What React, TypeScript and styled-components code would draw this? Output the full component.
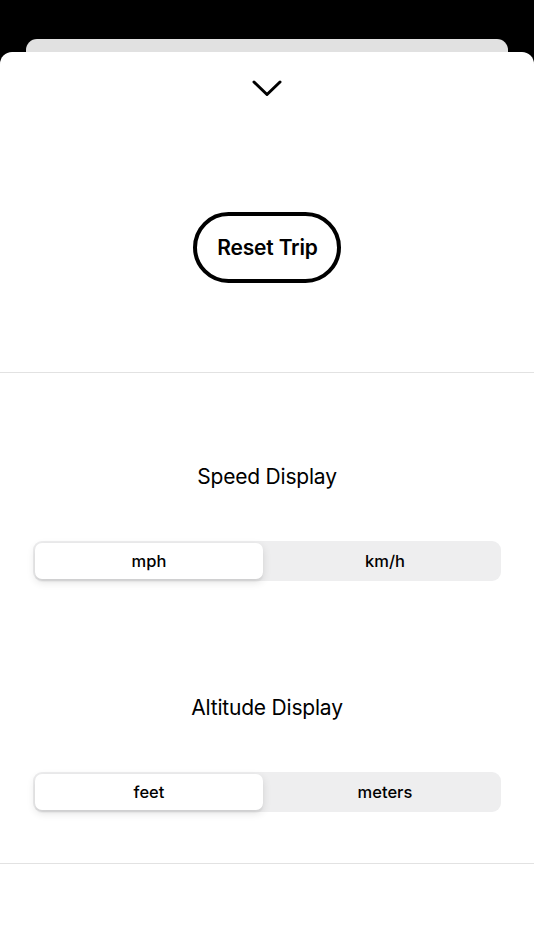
import React, { useState } from "react";
import styled, { createGlobalStyle } from "styled-components";

const Global = createGlobalStyle`
  html, body { margin: 0; padding: 0; background: #000; }
  body { font-family: Inter, "Noto Sans", "Liberation Sans", sans-serif; -webkit-font-smoothing: antialiased; }
`;

const Page = styled.div`
  min-height: 950px;
  background: #000;
  padding-top: 39px;
  box-sizing: border-box;
  display: flex;
  flex-direction: column;
`;

const BackCard = styled.div`
  height: 13px;
  margin: 0 26px;
  background: #e1e1e1;
  border-radius: 11px 11px 0 0;
`;

const Sheet = styled.div`
  flex: 1;
  background: #fff;
  border-radius: 12px 12px 0 0;
  display: flex;
  flex-direction: column;
`;

const TopSection = styled.section`
  height: 320px;
  display: flex;
  flex-direction: column;
  align-items: center;
  padding-top: 28px;
  box-sizing: border-box;
`;

const Chevron = styled.svg`
  width: 30px;
  height: 17px;
  display: block;
`;

const ResetButton = styled.button`
  margin-top: 115px;
  width: 148px;
  height: 71px;
  border: 4px solid #000;
  border-radius: 36px;
  background: #fff;
  color: #000;
  font-family: inherit;
  font-size: 21px;
  font-weight: 600;
  letter-spacing: -0.2px;
  cursor: pointer;
  padding: 0 0 0 1px;
  line-height: 1;
`;

const Divider = styled.hr`
  margin: 0;
  border: 0;
  height: 1px;
  background: #e2e2e2;
`;

const Settings = styled.section`
  padding: 90px 33px 51px;
  display: flex;
  flex-direction: column;
`;

const Group = styled.div<{ $first?: boolean }>`
  display: flex;
  flex-direction: column;
  margin-top: ${(p) => (p.$first ? 0 : 113)}px;
`;

const Title = styled.h2`
  margin: 0 0 50px;
  text-align: center;
  font-size: 21px;
  line-height: 28px;
  font-weight: 400;
  color: #000;
  letter-spacing: -0.2px;
`;

const Segmented = styled.div`
  height: 40px;
  background: #eeeeef;
  border-radius: 9px;
  padding: 2px;
  box-sizing: border-box;
  display: grid;
  grid-template-columns: 1fr 1fr;
  column-gap: 8px;
`;

const Segment = styled.button<{ $active: boolean }>`
  border: 0;
  border-radius: 7px;
  background: ${(p) => (p.$active ? "#fff" : "transparent")};
  box-shadow: ${(p) =>
    p.$active ? "0 3px 8px rgba(0,0,0,0.12), 0 3px 1px rgba(0,0,0,0.04)" : "none"};
  font-family: inherit;
  font-size: 16.5px;
  font-weight: 500;
  color: #000;
  cursor: pointer;
  padding: 0;
`;

const Footer = styled.div`
  flex: 1;
`;

function Control({ options, initial }: { options: string[]; initial: number }) {
  const [sel, setSel] = useState(initial);
  return (
    <Segmented>
      {options.map((o, i) => (
        <Segment key={o} $active={sel === i} onClick={() => setSel(i)}>
          {o}
        </Segment>
      ))}
    </Segmented>
  );
}

export default function App() {
  return (
    <>
      <Global />
      <Page>
        <BackCard />
        <Sheet>
          <TopSection>
            <Chevron viewBox="0 0 30 17" fill="none">
              <path
                d="M2 2 L15 14.5 L28 2"
                stroke="#000"
                strokeWidth="3"
                strokeLinecap="round"
                strokeLinejoin="round"
              />
            </Chevron>
            <ResetButton>Reset Trip</ResetButton>
          </TopSection>
          <Divider />
          <Settings>
            <Group $first>
              <Title>Speed Display</Title>
              <Control options={["mph", "km/h"]} initial={0} />
            </Group>
            <Group>
              <Title>Altitude Display</Title>
              <Control options={["feet", "meters"]} initial={0} />
            </Group>
          </Settings>
          <Divider />
          <Footer />
        </Sheet>
      </Page>
    </>
  );
}
